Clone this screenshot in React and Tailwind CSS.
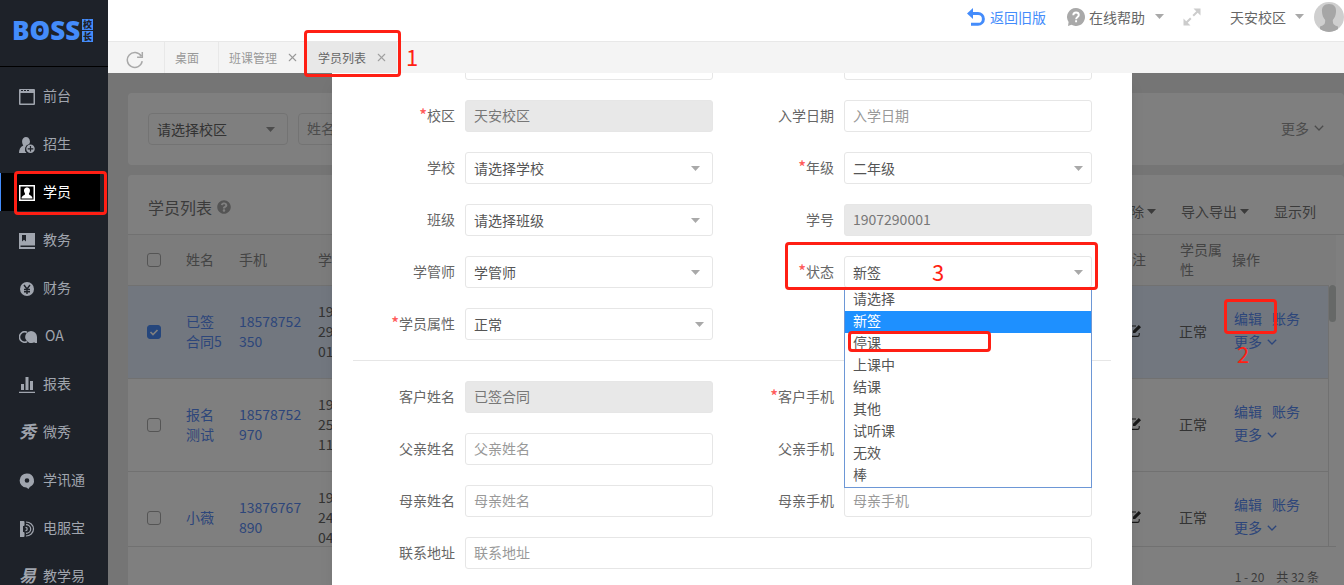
import React, { useState } from "react";
import { FaQuestionCircle } from "react-icons/fa";
import { X } from "lucide-react";

// Red box used for the step-by-step guide
const Mark = ({ className }) => (
  <span
    className={`absolute z-50 border-3 border-[#ff1f14] rounded-sm pointer-events-none ${className}`}
  />
);

const Step = ({ children, className }) => (
  <span
    className={`absolute z-50 text-[22px] leading-6 text-[#ff1f14] pointer-events-none ${className}`}
  >
    {children}
  </span>
);

const Caret = ({ className = "" }) => (
  <svg
    viewBox="0 0 9 5"
    className={`w-[9px] h-[5px] shrink-0 fill-current pointer-events-none ${className}`}
  >
    <path d="M0 0h9L4.500 5z" />
  </svg>
);

const Chevron = ({ className = "" }) => (
  <svg
    viewBox="0 0 10 6"
    className={`w-[10px] h-[6px] shrink-0 ${className}`}
    fill="none"
    stroke="currentColor"
    strokeWidth="1.300"
  >
    <path d="M0.800 0.800L5 5L9.200 0.800" />
  </svg>
);

const EditIcon = () => (
  <svg viewBox="0 0 14 14" className="w-[14px] h-[14px] text-[#333]">
    <path
      d="M8 2H2.500A1.700 1.700 0 0 0 .800 3.700v7a1.700 1.700 0 0 0 1.700 1.700h7a1.700 1.700 0 0 0 1.700-1.700V9"
      fill="none"
      stroke="currentColor"
      strokeWidth="1.100"
    />
    <path d="M10.800 1l2.200 2.200L7.200 9H5V6.800z" fill="currentColor" />
  </svg>
);

const icons = {
  desk: (
    <path
      fillRule="evenodd"
      d="M1 0h14a1 1 0 0 1 1 1v14a1 1 0 0 1-1 1H1a1 1 0 0 1-1-1V1a1 1 0 0 1 1-1zM2 1v1h2V1zm3 0v1h2V1zm3 0v1h2V1zM1.500 4v10.500h13V4z"
    />
  ),
  recruit: (
    <>
      <path d="M7 0a4 4.400 0 0 1 3.200 7A5.300 5.300 0 0 0 7.500 16H0c0-3.500 1.200-6 4.300-7.600C2.200 5.500 2.800 0 7 0z" />
      <path
        fillRule="evenodd"
        d="M11.500 7.500a4.250 4.250 0 1 1 0 8.500 4.250 4.250 0 0 1 0-8.500zM10.900 9v2.200H8.700v1.200h2.200v2.200h1.200v-2.200h2.200v-1.200h-2.200V9z"
      />
    </>
  ),
  student: (
    <>
      <path fillRule="evenodd" d="M0 0h16v16H0zM1.500 1.500v13h13v-13z" />
      <path d="M8 2.500c2.600 0 3.400 2.300 2.800 4.300-.3 1-.9 1.500-.9 2.200 0 1.200 3.600 1.400 3.600 4.500h-11c0-3.100 3.600-3.300 3.600-4.500 0-.7-.6-1.200-.9-2.200-.6-2 .2-4.300 2.800-4.300z" />
    </>
  ),
  teach: (
    <path
      fillRule="evenodd"
      d="M0 0h16v12.500H1.500V14H16v2H0zM3 2v6.500l2-1.700 2 1.700V2z"
    />
  ),
  finance: (
    <>
      <circle cx="8" cy="8" r="7" />
      <path
        d="M5 4l3 4 3-4M8 8v5M5 8.500h6M5 10.700h6"
        fill="none"
        stroke="#1e2229"
        strokeWidth="1.400"
      />
    </>
  ),
  report: (
    <path d="M0 14.700h16V16H0zM2 7h3v6H2zM6.500 0h3v13h-3zM11 4h3v9h-3z" />
  ),
  message: (
    <path
      fillRule="evenodd"
      d="M8 .500a7 7 0 0 1 2.800 13.400L9.500 16l-2.200-1.500A7 7 0 0 1 8 .500zm0 4.700a2.300 2.300 0 1 0 0 4.600 2.300 2.300 0 0 0 0-4.600z"
    />
  ),
  phone: (
    <>
      <path d="M1 0h3.500a1 1 0 0 1 1 1v3a1 1 0 0 1-1 1H4v6h.5a1 1 0 0 1 1 1v3a1 1 0 0 1-1 1H1z" />
      <path
        d="M7 1c4 0 7.500 3 7.500 7S11 15 7 15M7 3.700c2.500 0 4.700 1.800 4.700 4.300S9.500 12.300 7 12.300M6.500 6.300a1.700 1.700 0 0 1 0 3.400"
        fill="none"
        stroke="currentColor"
        strokeWidth="1.200"
      />
    </>
  ),
};

const menu = [
  { name: "前台", icon: "desk" },
  { name: "招生", icon: "recruit" },
  { name: "学员", icon: "student" },
  { name: "教务", icon: "teach" },
  { name: "财务", icon: "finance" },
  { name: "OA", icon: "oa" },
  { name: "报表", icon: "report" },
  { name: "微秀", glyph: "秀" },
  { name: "学讯通", icon: "message" },
  { name: "电服宝", icon: "phone" },
  { name: "教学易", glyph: "易" },
];

const MenuIcon = ({ item }) => {
  if (item.glyph) {
    return (
      <span
        aria-hidden="true"
        className="w-4 pb-1 text-[17px] leading-4 font-bold italic whitespace-nowrap"
      >
        {item.glyph}
      </span>
    );
  }
  if (item.icon === "oa") {
    return (
      <svg viewBox="0 0 18 12" className="w-[18px] h-3 fill-current">
        <path
          d="M8 1.200A5.300 5.300 0 1 0 8 10.800"
          fill="none"
          stroke="currentColor"
          strokeWidth="1.500"
        />
        <path d="M12 0a6 6 0 0 1 6 6v6h-2.500v-1A6 6 0 1 1 12 0z" />
      </svg>
    );
  }
  return (
    <svg viewBox="0 0 16 16" className="w-4 h-4 fill-current">
      {icons[item.icon]}
    </svg>
  );
};

const Sidebar = () => (
  <aside className="w-[108px] shrink-0 bg-[#1e2229] text-[#a0a5ae]">
    <div className="h-[67px] border-b border-black flex items-start pt-[19px] pl-3 gap-[2px]">
      <span className="relative w-[68px] font-['Open_Sans',sans-serif] font-extrabold text-[26px] leading-[22px] text-[#448cfb]">
        BOSS
        <i className="absolute left-[26px] top-[9px] w-1 h-1 rounded-full bg-[#448cfb]" />
      </span>
      <span className="flex flex-col gap-px text-[9px] leading-[11px] font-bold text-[#1e2229]">
        <b className="w-[11px] bg-[#448cfb] text-center">校</b>
        <b className="w-[11px] bg-[#448cfb] text-center">长</b>
      </span>
    </div>
    <nav className="flex flex-col gap-[10px] pt-[10px]">
      {menu.map((item) => (
        <a
          key={item.name}
          href="#"
          className={
            item.name === "学员"
              ? "relative flex items-center gap-2 h-[38px] pt-[2px] mr-2 pl-[18px] border-l border-[#448cfb] bg-black text-white"
              : "flex items-center gap-2 h-[38px] pt-[2px] pl-[19px]"
          }
        >
          <MenuIcon item={item} />
          <span className="pb-1">{item.name}</span>
          {item.name === "学员" && (
            <Mark className="left-[13px] -right-[7px] -top-[2px] -bottom-1" />
          )}
        </a>
      ))}
    </nav>
  </aside>
);

const Header = () => (
  <header className="h-[41px] pb-2 flex items-center justify-end bg-white text-[#666]">
    <a href="#" className="flex items-center gap-[5px] text-[#448cfb]">
      <svg viewBox="0 0 18 18" className="w-[18px] h-[18px]">
        <path d="M0 5.500L6 0v11z" fill="currentColor" />
        <path
          d="M5 5.500h6a5.400 5.400 0 0 1 0 10.800H4"
          fill="none"
          stroke="currentColor"
          strokeWidth="3"
        />
      </svg>
      返回旧版
    </a>
    <button className="flex items-center ml-[21px]">
      <svg viewBox="0 0 18 18" className="w-[18px] h-[18px] mr-1">
        <path
          d="M9 0a9 9 0 1 1-4.500 16.800L1 18l.6-4A9 9 0 0 1 9 0z"
          fill="#a9a9a9"
        />
        <path
          d="M6.300 7.200C6.300 3.500 11.800 3.700 11.800 7c0 2-2.700 2-2.700 4.200M9.100 12.300v2"
          fill="none"
          stroke="#fff"
          strokeWidth="1.900"
        />
      </svg>
      在线帮助
      <Caret className="ml-[10px] text-[#a9a9a9]" />
    </button>
    <button aria-label="全屏" className="ml-[19px] text-[#ccc]">
      <svg viewBox="0 0 18 18" className="w-[18px] h-[18px] fill-current">
        <path d="M10.500 0.500H17.500V7.500zM0.500 10.500V17.500H7.500z" />
        <path
          d="M15.500 2.500L10.200 7.800M2.500 15.500L7.800 10.200"
          stroke="currentColor"
          strokeWidth="2"
        />
      </svg>
    </button>
    <button className="flex items-center ml-[29px]">
      天安校区
      <Caret className="ml-[9px] mr-[10px] text-[#a9a9a9]" />
      <svg viewBox="0 0 30 30" className="w-[30px] h-[30px]">
        <clipPath id="avatar">
          <circle cx="15" cy="15" r="15" />
        </clipPath>
        <g clipPath="url(#avatar)">
          <path d="M0 0h30v30H0z" fill="#cfcfcf" />
          <path
            d="M15 2c5 0 7.500 3 7 8-.2 3-1.300 6-3.200 8 0 4 .7 5 5.200 6.500V30H6v-5.500c4.500-1.500 5.200-2.500 5.200-6.500C9.300 16 8.200 13 8 10c-.5-5 2-8 7-8z"
            fill="#a6a6a6"
          />
        </g>
      </svg>
    </button>
  </header>
);

const TabBar = () => (
  <div className="h-8 shrink-0 flex items-stretch border-t border-[#e8e8e8] bg-[#f4f4f4] text-xs text-[#999]">
    <button
      aria-label="刷新"
      className="w-14 flex items-center justify-center pt-1 pr-[2px]"
    >
      <svg
        viewBox="0 0 18 18"
        className="w-[18px] h-[18px]"
        fill="none"
        stroke="#a9a9a9"
        strokeWidth="1.500"
      >
        <path d="M16.200 10.200A7.500 7.500 0 1 1 15.200 5M16.300 1v5.200h-5.200" />
      </svg>
    </button>
    <a
      href="#"
      className="flex items-center border-l border-[#e8e8e8] pl-[10px] pr-[19px]"
    >
      桌面
    </a>
    <a
      href="#"
      className="flex items-center gap-[9px] border-l border-[#e8e8e8] pl-[10px] pr-2"
    >
      班课管理
      <X size={13} strokeWidth={2} />
    </a>
    <a
      href="#"
      className="relative flex items-center gap-[9px] bg-[#e8e8e8] pl-[11px] pr-[9px] text-[#666]"
    >
      学员列表
      <X size={13} strokeWidth={2} color="#a0a0a0" />
      <Mark className="-left-[3px] -right-1 -top-3 -bottom-1" />
      <Step className="left-full ml-[9px] top-[2px]">1</Step>
    </a>
  </div>
);

const students = [
  { name: "已签合同5", phone: "18578752350", no: "1907290001", checked: true },
  { name: "报名测试", phone: "18578752970", no: "1907250011" },
  { name: "小薇", phone: "13876767890", no: "1907240004" },
];

const StudentTable = () => (
  <div className="mr-2 flex h-[312px] overflow-hidden border-b border-[#e2e2e2]">
    <table className="flex-1 table-fixed border-separate border-spacing-0 text-left leading-5 [&_td]:border-t [&_td]:border-[#e2e2e2] [&_td+td]:pb-[2px] [&_th+th]:pb-[2px]">
      <thead>
        <tr className="h-[50px] bg-[#f9f9f9] text-[#888] [&>th]:font-normal">
          <th className="w-12 pl-[19px]">
            <input
              type="checkbox"
              aria-label="全选"
              className="block appearance-none w-[14px] h-[14px] border border-[#aaa] rounded-[3px]"
            />
          </th>
          <th className="w-[53px] pl-[10px]">姓名</th>
          <th className="w-[79px] pl-[10px]">手机</th>
          <th className="w-[47px] pl-[10px] whitespace-nowrap">学号</th>
          <th></th>
          <th className="w-[62px] pl-[10px]">备注</th>
          <th className="w-[57px] pl-[10px]">学员属性</th>
          <th className="w-[101px] pl-[5px]">操作</th>
        </tr>
      </thead>
      <tbody>
        {students.map((s) => (
          <tr
            key={s.no}
            className={s.checked ? "h-[93px] bg-[#e4efff]" : "h-[93px]"}
          >
            <td className="pl-[19px]">
              <span className="relative block w-[14px] h-[14px]">
                <input
                  type="checkbox"
                  aria-label={s.name}
                  defaultChecked={s.checked}
                  className="block appearance-none w-[14px] h-[14px] border border-[#aaa] rounded-[3px] checked:bg-[#4a8cf8] checked:border-[#4a8cf8]"
                />
                {s.checked && (
                  <svg
                    viewBox="0 0 14 14"
                    className="absolute inset-0 pointer-events-none"
                    fill="none"
                    stroke="#fff"
                    strokeWidth="1.700"
                  >
                    <path d="M3.500 7L6 9.500L10.500 5" />
                  </svg>
                )}
              </span>
            </td>
            <td className="pl-[10px] pr-[5px] text-[#5a8cf5]">
              <a href="#">{s.name}</a>
            </td>
            <td className="pl-[10px] pr-[5px] text-[#5a8cf5] break-all">
              <a href="#">{s.phone}</a>
            </td>
            <td className="pl-[10px] pr-[5px] text-[#666] break-all">{s.no}</td>
            <td></td>
            <td className="pl-5">
              <EditIcon />
            </td>
            <td className="pl-[9px] text-[#666]">正常</td>
            <td className="pl-[7px] leading-[23px] text-[#5a8cf5]">
              <div className="flex gap-[10px]">
                <a href="#" className="relative">
                  编辑
                  {s.checked && (
                    <>
                      <Mark className="-left-[10px] -right-[15px] -top-2 -bottom-1" />
                      <Step className="left-[3px] top-[34px]">2</Step>
                    </>
                  )}
                </a>
                <a href="#">账务</a>
              </div>
              <button className="flex items-center gap-[5px] pb-[2px]">
                更多
                <Chevron />
              </button>
            </td>
          </tr>
        ))}
      </tbody>
    </table>
    <div className="w-2">
      <div className="h-[50px] bg-[#f9f9f9]" />
      <div className="h-full border-l border-[#e2e2e2]">
        <div className="h-[37px] rounded-full bg-[#ccd1cf]" />
      </div>
    </div>
  </div>
);

const StudentPage = () => (
  <div className="pl-5 pt-5 h-full flex flex-col gap-[10px] bg-[#ebebeb]">
    <div className="flex items-center gap-[10px] p-5 bg-white rounded">
      <div className="relative w-[140px]">
        <select
          aria-label="校区"
          className="w-full h-8 pl-2 appearance-none border border-[#e6e6e6] rounded-sm text-[#666]"
        >
          <option>请选择校区</option>
        </select>
        <Caret className="absolute right-[13px] top-[14px] text-[#999]" />
      </div>
      <input
        type="text"
        aria-label="姓名"
        placeholder="姓名"
        className="w-[140px] h-8 px-2 pb-[2px] border border-[#e6e6e6] rounded-sm placeholder:text-[#999]"
      />
      <button className="ml-auto flex items-center gap-[5px] pb-[2px] text-[#999]">
        更多
        <Chevron />
      </button>
    </div>
    <div className="flex-1 bg-white rounded">
      <div className="h-[60px] flex items-center pl-5 pr-7 pt-[5px] border-b border-[#e2e2e2] text-[#777]">
        <h2 className="text-base leading-6">学员列表</h2>
        <FaQuestionCircle className="ml-[5px] w-[14px] h-[14px] text-[#a9a9a9]" />
        <div className="ml-auto pt-2 flex items-center gap-[25px]">
          <button className="flex items-center gap-[3px]">
            删除 <Caret />
          </button>
          <button className="flex items-center gap-[3px]">
            导入导出 <Caret />
          </button>
          <button>显示列</button>
        </div>
      </div>
      <StudentTable />
      <div className="flex justify-end gap-3 pt-5 pr-[25px] text-xs leading-5 text-[#777]">
        <span>1 - 20</span>
        <span>共 32 条</span>
      </div>
    </div>
  </div>
);

// Label and control of the edit form, side by side
const Field = ({ id, label, required, wide, children }) => (
  <div
    className={
      wide
        ? "col-span-2 flex items-center gap-[10px] pr-[19px]"
        : "flex items-center gap-[10px] pr-[19px]"
    }
  >
    <label
      htmlFor={id}
      className="w-[102px] shrink-0 pb-[2px] text-right text-[#666] whitespace-nowrap"
    >
      {required && (
        <span className="text-base leading-none font-medium text-[#ff5b5b]">
          *
        </span>
      )}
      {label}
    </label>
    <div className="relative flex-1">{children}</div>
  </div>
);

const TextField = ({ id, label, name, required, wide, value, placeholder }) => (
  <Field id={id} label={label} required={required} wide={wide}>
    <input
      id={id}
      type="text"
      aria-label={name}
      defaultValue={value}
      placeholder={placeholder}
      disabled={!!value}
      className="block w-full h-8 px-2 pb-[2px] border border-[#e6e6e6] rounded-[3px] text-[#777] placeholder:text-[#999] disabled:bg-[#e8e8e8]"
    />
  </Field>
);

const SelectField = ({ id, label, required, value, inset, children }) => (
  <Field id={id} label={label} required={required}>
    <select
      id={id}
      className="block w-full h-8 px-2 pb-px appearance-none border border-[#e6e6e6] rounded-[3px] bg-white text-[#555]"
    >
      <option>{value}</option>
    </select>
    <Caret
      className={
        inset
          ? "absolute right-[13px] top-[14px] text-[#a9a9a9]"
          : "absolute right-[9px] top-[14px] text-[#a9a9a9]"
      }
    />
    {children}
  </Field>
);

const statusList = [
  "请选择",
  "新签",
  "停课",
  "上课中",
  "结课",
  "其他",
  "试听课",
  "无效",
  "棒",
];

const EditForm = () => {
  const [status, setStatus] = useState("新签");

  return (
    <form className="-mt-[25px] px-[21px]">
      <div className="grid grid-cols-2 gap-y-5 pb-5 border-b border-[#e6e6e6]">
        <TextField id="name" name="姓名" />
        <TextField id="birthday" name="生日" />
        <TextField id="campus" label="校区" required value="天安校区" />
        <TextField id="joinDate" label="入学日期" placeholder="入学日期" />
        <SelectField id="school" label="学校" value="请选择学校" inset />
        <SelectField id="grade" label="年级" required value="二年级" />
        <SelectField id="class" label="班级" value="请选择班级" inset />
        <TextField id="studentNo" label="学号" value="1907290001" />
        <SelectField id="manager" label="学管师" value="学管师" inset />
        <SelectField id="status" label="状态" required value={status}>
          <ul
            role="listbox"
            aria-label="状态"
            className="absolute z-20 left-0 right-0 top-8 border border-[#6d97d6] bg-white text-[#555]"
          >
            {statusList.map((name) => (
              <li
                key={name}
                role="option"
                aria-selected={name === status}
                onClick={() => setStatus(name)}
                className={
                  name === status
                    ? "relative pl-2 pb-1 leading-[18px] bg-[#1e90ff] text-white"
                    : "relative pl-2 pb-1 leading-[18px]"
                }
              >
                {name}
                {name === "停课" && (
                  <Mark className="left-[3px] w-[143px] -top-[2px] bottom-[3px]" />
                )}
              </li>
            ))}
          </ul>
          <Mark className="-left-[59px] -right-[6px] -top-[14px] -bottom-[2px]" />
          <Step className="left-[88px] top-[3px]">3</Step>
        </SelectField>
        <SelectField id="kind" label="学员属性" required value="正常" />
      </div>
      <div className="grid grid-cols-2 gap-y-5 pt-5">
        <TextField id="customer" label="客户姓名" value="已签合同" />
        <TextField id="customerPhone" label="客户手机" required />
        <TextField id="father" label="父亲姓名" placeholder="父亲姓名" />
        <TextField id="fatherPhone" label="父亲手机" />
        <TextField id="mother" label="母亲姓名" placeholder="母亲姓名" />
        <TextField id="motherPhone" label="母亲手机" placeholder="母亲手机" />
        <TextField id="address" label="联系地址" placeholder="联系地址" wide />
      </div>
    </form>
  );
};

const App = () => {
  return (
    <div className="flex h-screen overflow-hidden text-sm font-['Noto_Sans_CJK_SC',sans-serif]">
      <Sidebar />
      <div className="flex-1 min-w-0 flex flex-col">
        <Header />
        <TabBar />
        <main className="relative flex-1 min-h-0 overflow-hidden">
          <StudentPage />
          <div className="absolute inset-0 z-10 flex justify-center pl-3 bg-black/50">
            <div
              role="dialog"
              aria-label="编辑学员"
              className="w-[800px] max-w-full overflow-hidden bg-white shadow-lg"
            >
              <EditForm />
            </div>
          </div>
        </main>
      </div>
    </div>
  );
};

export default App;
